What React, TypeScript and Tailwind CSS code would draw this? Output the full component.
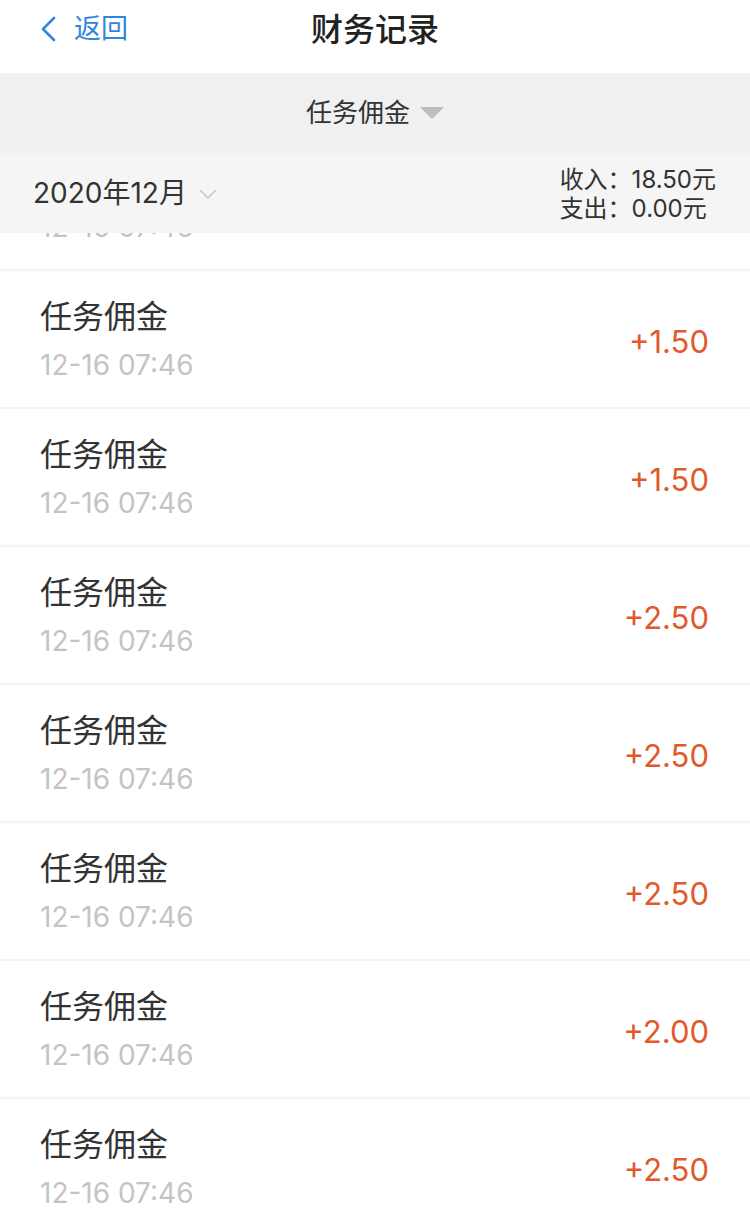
const rows = ["2.00", "1.50", "1.50", "2.50", "2.50", "2.50", "2.00", "2.50"];

export default function App() {
  return (
    <div
      className="w-[750px] h-[1213px] overflow-hidden flex flex-col bg-white text-[#333]"
      style={{ fontFamily: 'Inter, "Noto Sans CJK SC", sans-serif' }}
    >
      {/* nav bar */}
      <div className="h-[73px] shrink-0 relative flex items-start justify-center bg-white pt-[12px]">
        <div className="absolute left-[40px] top-[14px] flex items-center gap-[18px] text-[#2f86de]">
          <svg width="16" height="26" viewBox="0 0 16 26" fill="none">
            <polyline points="14,2 3,13 14,24" stroke="#2f86de" strokeWidth="2.6" strokeLinecap="round" strokeLinejoin="round" />
          </svg>
          <span className="text-[27px] leading-[30px]">返回</span>
        </div>
        <span className="text-[32px] leading-[36px] font-medium text-[#222]">财务记录</span>
      </div>

      {/* type filter */}
      <div className="h-[80px] shrink-0 bg-[#f0f0f0] flex items-center justify-center gap-[10px]">
        <span className="text-[26px] leading-none text-[#333]">任务佣金</span>
        <svg width="24" height="12" viewBox="0 0 24 12">
          <polygon points="0,0 24,0 12,12" fill="#bdbdbd" />
        </svg>
      </div>

      {/* month summary */}
      <div className="h-[80px] shrink-0 bg-[#f5f5f5] flex items-center justify-between pl-[33px] pr-[34px]">
        <div className="flex items-center gap-[12px]">
          <span className="text-[28px] leading-none text-[#333]">2020年12月</span>
          <svg width="18" height="10" viewBox="0 0 18 10" fill="none" className="mt-[2px]">
            <polyline points="1,1 9,9 17,1" stroke="#c8c8c8" strokeWidth="1.6" />
          </svg>
        </div>
        <div className="flex flex-col text-[24px] leading-[29px] text-[#333] pt-[2px]">
          <span>收入：18.50元</span>
          <span>支出：0.00元</span>
        </div>
      </div>

      {/* records */}
      <div className="flex-1 overflow-hidden">
        <div className="-mt-[100px]">
          {rows.map((amt, i) => (
            <div
              key={i}
              className="h-[138px] flex items-center justify-between pl-[40px] pr-[41px] border-b-2 border-[#f4f4f4]"
            >
              <div className="flex flex-col">
                <span className="text-[32px] leading-[38px] text-[#333]">任务佣金</span>
                <span className="text-[28px] leading-[32px] mt-[13px] text-[#c4c4c4]">12-16 07:46</span>
              </div>
              <span className="text-[31px] leading-none text-[#e05a2b] pt-[4px]">+{amt}</span>
            </div>
          ))}
        </div>
      </div>
    </div>
  );
}
